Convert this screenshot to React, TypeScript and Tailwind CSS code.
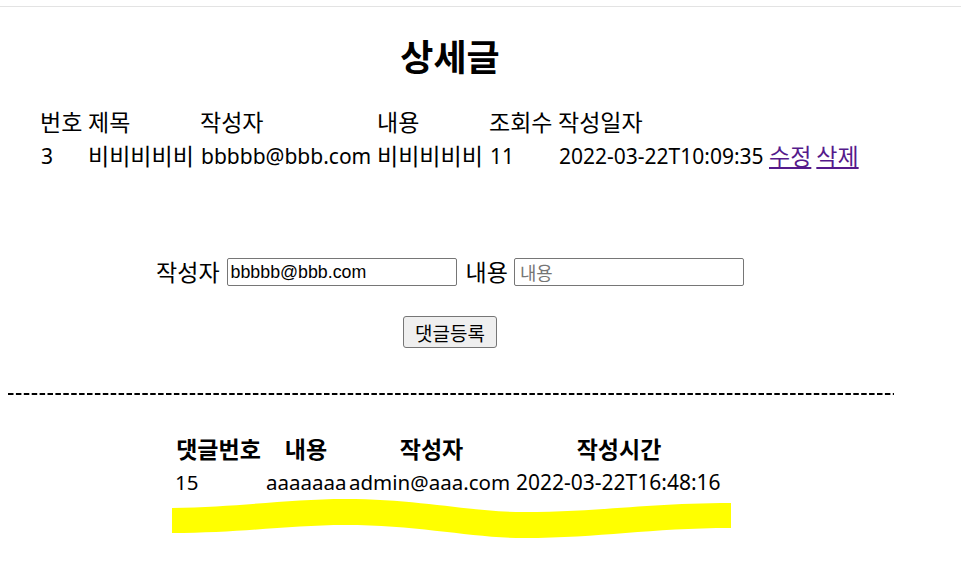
import React from "react";

const body = { fontFamily: '"Noto Sans", "Noto Sans CJK KR", sans-serif' };

export default function App() {
  return (
    <div
      className="relative w-[961px] h-[583px] overflow-hidden bg-white text-black text-[21px]"
      style={body}
    >
      <div className="h-[6px]" />
      <div className="h-px bg-[#e3e3e3]" />

      {/* Title */}
      <div className="w-[900px] mt-[22px] h-[52px] flex items-center justify-center">
        <h1 className="text-[36px] font-bold leading-none" style={{ fontFamily: '"Noto Sans CJK KR", sans-serif' }}>
          상세글
        </h1>
      </div>

      {/* Detail table */}
      <div className="mt-[24px] ml-[40px] flex flex-col">
        <div className="flex h-[34px] items-center leading-none whitespace-nowrap text-[23px]">
          <div className="w-[48px]">번호</div>
          <div className="w-[112px]">제목</div>
          <div className="w-[177px]">작성자</div>
          <div className="w-[112px]">내용</div>
          <div className="w-[69px]">조회수</div>
          <div>작성일자</div>
        </div>
        <div className="flex h-[34px] items-center leading-none whitespace-nowrap">
          <div className="w-[48px] pl-px">3</div>
          <div className="w-[112px] text-[23px]">비비비비비</div>
          <div className="w-[177px] pl-px">bbbbb@bbb.com</div>
          <div className="w-[112px] text-[23px]">비비비비비</div>
          <div className="w-[69px] pl-px">11</div>
          <div className="w-[211px] pl-px">2022-03-22T10:09:35</div>
          <a href="#" className="text-[#551a8b] underline text-[23px]">수정</a>
          <a href="#" className="ml-[5px] text-[#551a8b] underline text-[23px]">삭제</a>
        </div>
      </div>

      {/* Comment form */}
      <div className="mt-[85px] w-[900px] flex items-center justify-center h-[28px] whitespace-nowrap">
        <span className="leading-none text-[23px]">작성자</span>
        <input
          className="ml-[7px] w-[230px] h-[28px] border border-[#767676] rounded-[2px] px-[3px] text-[17.8px] text-black outline-none"
          style={{ fontFamily: '"Liberation Sans", Arial, sans-serif' }}
          defaultValue="bbbbb@bbb.com"
        />
        <span className="ml-[9px] leading-none text-[23px]">내용</span>
        <input
          className="ml-[6px] w-[230px] h-[28px] border border-[#767676] rounded-[2px] px-[5px] text-[17.8px] placeholder:text-[#757575] outline-none"
          style={{ fontFamily: '"Noto Sans CJK KR", sans-serif' }}
          placeholder="내용"
        />
      </div>

      <div className="mt-[30px] w-[900px] flex justify-center">
        <button
          className="w-[94px] h-[32px] bg-[#efefef] border border-[#767676] rounded-[3px] text-[19px] leading-none"
          style={{ fontFamily: '"Noto Sans CJK KR", sans-serif' }}
        >
          댓글등록
        </button>
      </div>

      {/* Dashed separator */}
      <div className="mt-[45px] ml-[8px] h-[2px]">
        <svg width="886" height="2" className="block">
          <line x1="0" y1="1" x2="886" y2="1" stroke="#000" strokeWidth="2" strokeDasharray="5.5 2.4" />
        </svg>
      </div>

      {/* Comment table */}
      <div className="mt-[36px] ml-[173px] flex flex-col">
        <div className="flex h-[34px] items-center leading-none whitespace-nowrap font-bold text-[23px]" style={{ fontFamily: '"Noto Sans CJK KR", sans-serif' }}>
          <div className="w-[91px] text-center">댓글번호</div>
          <div className="w-[84px] text-center">내용</div>
          <div className="w-[167px] text-center">작성자</div>
          <div className="w-[208px] text-center">작성시간</div>
        </div>
        <div className="flex h-[34px] items-center leading-none whitespace-nowrap text-[20.5px]">
          <div className="w-[91px] pl-[2px]">15</div>
          <div className="w-[84px] pl-[2px]">aaaaaaa</div>
          <div className="w-[167px] pl-[1px]">admin@aaa.com</div>
          <div className="w-[208px] pl-[1px] text-[21px]">2022-03-22T16:48:16</div>
        </div>
      </div>

      {/* Yellow highlighter mark */}
      <svg className="absolute left-0 top-0 pointer-events-none" width="961" height="583">
        <path
          d="M172,508 C240,507 290,499 345,499 C420,499 470,512 524,512 C600,512 650,503 731,503 L731,528 C650,528 600,538 524,538 C470,538 420,525 345,525 C290,525 240,533 172,533 Z"
          fill="#ffff00"
        />
      </svg>
    </div>
  );
}
